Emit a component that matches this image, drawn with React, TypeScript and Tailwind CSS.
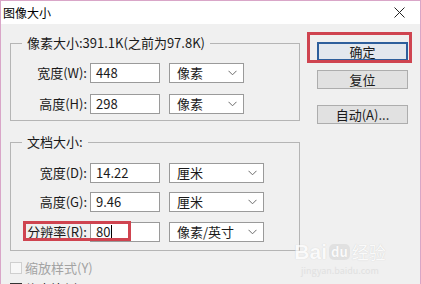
import React from "react";

const font = { fontFamily: '"Noto Sans CJK SC", "Noto Sans", sans-serif' };

function Chevron() {
  return (
    <svg width="9" height="6" viewBox="0 0 9 6" className="text-[#6b6b6b]">
      <polyline points="0.5,0.8 4.5,4.8 8.5,0.8" fill="none" stroke="currentColor" strokeWidth="1" />
    </svg>
  );
}

function Field({
  label,
  value,
  unit,
  selectWidth,
  caret,
}: {
  label: string;
  value: string;
  unit: string;
  selectWidth: string;
  caret?: boolean;
}) {
  return (
    <div className="flex h-[20px] items-center">
      <div className="w-[76px] text-right leading-[20px] text-[#1a1a1a]">{label}</div>
      <div className="ml-[3px] flex h-[20px] w-[70px] items-center border border-[#9a9a9a] bg-white pl-[5px] leading-[18px] text-[#1a1a1a]">
        {value}
        {caret && <span className="ml-[1px] inline-block h-[14px] w-px bg-black" />}
      </div>
      <div
        className={`ml-[9px] flex h-[20px] items-center justify-between border border-[#9a9a9a] bg-white pl-[7px] pr-[6px] leading-[18px] text-[#1a1a1a] ${selectWidth}`}
      >
        <span>{unit}</span>
        <Chevron />
      </div>
    </div>
  );
}

function Btn({ children, primary }: { children: React.ReactNode; primary?: boolean }) {
  return (
    <div
      className={`flex h-[19px] w-[91px] items-center justify-center leading-[17px] text-[#1a1a1a] ${
        primary ? "border-2 border-[#2e5f9c] bg-[#e3e8ee]" : "border border-[#adadad] bg-[#e1e1e1]"
      }`}
    >
      {children}
    </div>
  );
}

export default function App() {
  return (
    <div
      className="relative h-[284px] w-[421px] overflow-hidden border-x border-t border-[#d9a6c8] bg-[#f0f0f0] text-[13px]"
      style={font}
    >
      {/* title bar */}
      <div className="flex h-[23px] items-center justify-between bg-white pl-[2px] pr-[15px]">
        <span className="text-[12px] leading-[23px] text-black">图像大小</span>
        <svg width="11" height="11" viewBox="0 0 11 11">
          <path d="M0.5 0.5 L10.5 10.5 M10.5 0.5 L0.5 10.5" stroke="#222" strokeWidth="1" />
        </svg>
      </div>

      <div className="flex">
        {/* left column */}
        <div className="pl-[9px]">
          <fieldset className="mt-[10px] w-[290px] border border-[#b5b5b5] pb-[6px] pt-[11px]">
            <legend className="ml-[11px] px-[5px] leading-[18px] text-[#1a1a1a]">像素大小:391.1K(之前为97.8K)</legend>
            <div className="flex flex-col gap-[11px]">
              <Field label="宽度(W):" value="448" unit="像素" selectWidth="w-[75px]" />
              <Field label="高度(H):" value="298" unit="像素" selectWidth="w-[75px]" />
            </div>
          </fieldset>

          <fieldset className="mt-[12px] w-[290px] border border-[#b5b5b5] pb-[8px] pt-[12px]">
            <legend className="ml-[11px] px-[5px] leading-[18px] text-[#1a1a1a]">文档大小:</legend>
            <div className="flex flex-col gap-[9px]">
              <Field label="宽度(D):" value="14.22" unit="厘米" selectWidth="w-[95px]" />
              <Field label="高度(G):" value="9.46" unit="厘米" selectWidth="w-[95px]" />
              <div className="mt-px">
                <Field label="分辨率(R):" value="80" unit="像素/英寸" selectWidth="w-[95px]" caret />
              </div>
            </div>
          </fieldset>

          <div className="mt-[10px] flex items-center gap-[3px]">
            <span className="h-[12px] w-[12px] border border-[#cfcfcf] bg-[#f7f7f7]" />
            <span className="leading-[14px] text-[#a3a3a3]">缩放样式(Y)</span>
          </div>
          <div className="mt-[7px] flex items-center gap-[3px]">
            <span className="h-[12px] w-[12px] border border-[#333] bg-white" />
            <span className="leading-[14px] text-[#1a1a1a]">约束比例</span>
          </div>
        </div>

        {/* right column */}
        <div className="ml-[17px] flex flex-col pt-[18px]">
          <Btn primary>确定</Btn>
          <div className="mt-[9px]">
            <Btn>复位</Btn>
          </div>
          <div className="mt-[16px]">
            <Btn>自动(A)...</Btn>
          </div>
        </div>
      </div>

      {/* red annotation boxes */}
      <div className="pointer-events-none absolute left-[306px] top-[31px] h-[31px] w-[105px] border-[3px] border-[#cf4450]" />
      <div className="pointer-events-none absolute left-[22px] top-[220px] h-[20px] w-[108px] border-[3px] border-[#cf4450]" />

      {/* watermark */}
      <div className="pointer-events-none absolute left-[285px] top-[240px] flex w-[108px] flex-col items-center text-white opacity-70">
        <div className="flex h-[22px] items-center gap-[2px] leading-[22px] [text-shadow:0_0_1px_#bdbdbd]">
          <span className="text-[21px] font-bold" style={{ fontFamily: '"Liberation Sans", sans-serif' }}>
            Bai
          </span>
          <span className="rounded-[5px] bg-[#dcdcdc] px-[2px] text-[13px] font-bold leading-[16px]">du</span>
          <span className="text-[17px]">经验</span>
        </div>
        <span className="mt-[3px] text-[9px] leading-[10px] text-[#dadada]">jingyan.baidu.com</span>
      </div>
    </div>
  );
}
